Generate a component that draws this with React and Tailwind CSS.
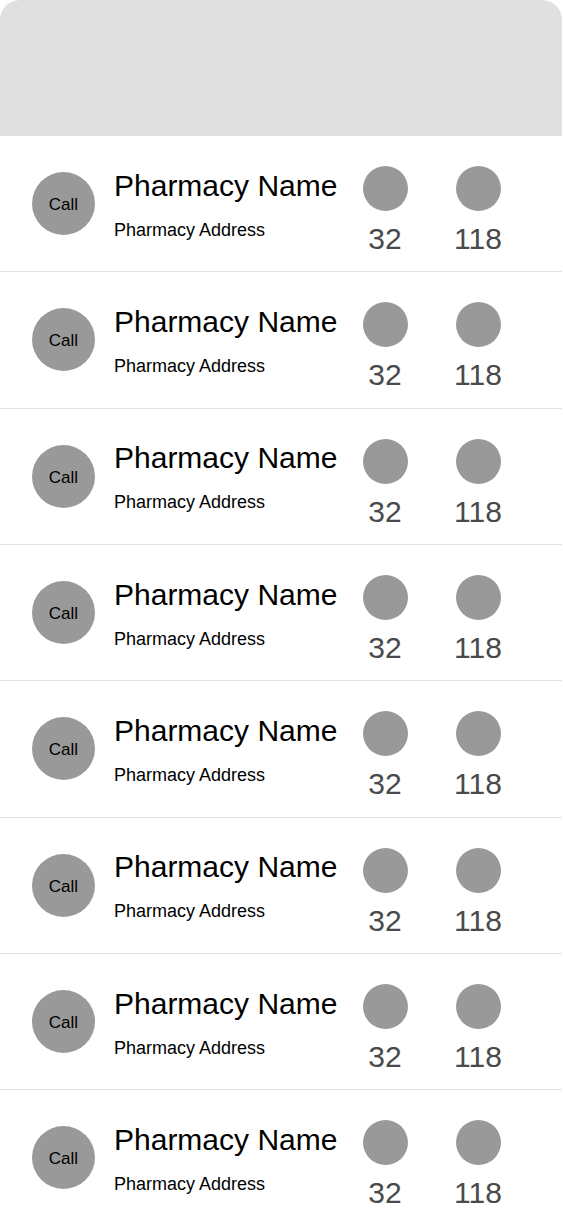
const rows = Array.from({ length: 8 }, (_, i) => ({ id: i, name: 'Pharmacy Name', address: 'Pharmacy Address', a: 32, b: 118 }))

function Stat({ value, className = '' }) {
  return (
    <div className={`flex w-[60px] flex-col items-center gap-[13px] self-start pt-[30px] ${className}`}>
      <div className="h-[45px] w-[45px] rounded-full bg-[#999999]" />
      <span className="text-[30px] leading-none text-[#4a4a4a]">{value}</span>
    </div>
  )
}

function Row({ name, address, a, b }) {
  return (
    <div className="flex h-[136.33px] shrink-0 items-center border-b border-[#e2e2e2]">
      <button className="ml-[32px] flex h-[63px] w-[63px] shrink-0 items-center justify-center rounded-full bg-[#999999] pt-[2px] text-[17px] text-black">
        Call
      </button>
      <div className="ml-[19px] mt-[2px] flex w-[241px] flex-col gap-[20px]">
        <span className="text-[30px] leading-none text-black">{name}</span>
        <span className="text-[18px] leading-none text-black">{address}</span>
      </div>
      <Stat value={a} />
      <Stat value={b} className="ml-[33px]" />
    </div>
  )
}

export default function App() {
  return (
    <div
      className="flex h-[1218px] w-[562px] flex-col overflow-hidden bg-white"
      style={{ fontFamily: '"Liberation Sans", Arial, sans-serif' }}
    >
      <header className="h-[136px] shrink-0 rounded-t-[20px] bg-[#e0e0e0]" />
      {rows.map(r => (
        <Row key={r.id} {...r} />
      ))}
    </div>
  )
}
